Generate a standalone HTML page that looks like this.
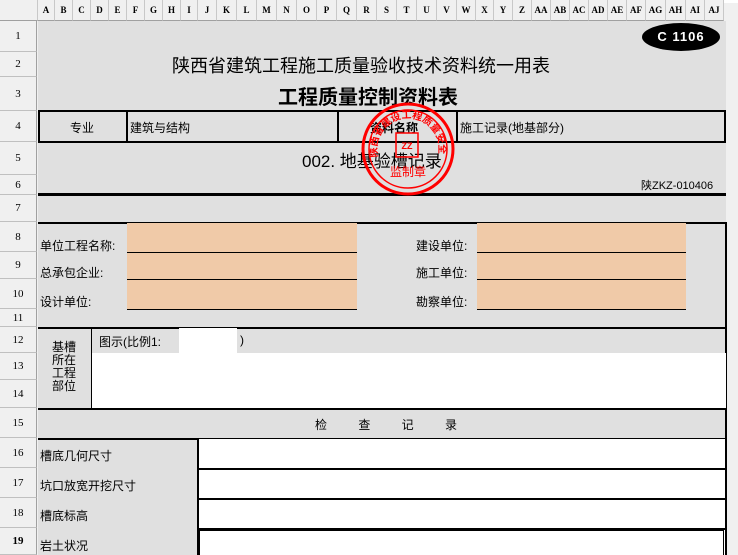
<!DOCTYPE html>
<html><head><meta charset="utf-8"><style>
*{margin:0;padding:0;box-sizing:border-box}
body{width:738px;height:555px;overflow:hidden;background:#f0f0f0;position:relative;font-family:"Liberation Sans","Noto Sans CJK SC","WenQuanYi Zen Hei",sans-serif;color:#000}
.a{position:absolute}
.hdr{position:absolute;top:0;height:21px;font:bold 9px "Liberation Serif",serif;line-height:21px;text-align:center;border-right:1px solid #c8c8c8;border-bottom:1px solid #a0a0a0;background:#f0f0f0}
.rn{position:absolute;left:0;width:37px;font:11px "Liberation Serif",serif;text-align:center;border-bottom:1px solid #c0c0c0;border-right:1px solid #a0a0a0;background:#f0f0f0}
.t{position:absolute;font-size:12px;white-space:nowrap}
.or{position:absolute;background:#f0caa8;border-bottom:1.5px solid #000}
</style></head><body>
<div class="a" style="left:0;top:0;width:738px;height:3px;background:#fff"></div>
<div class="a" style="left:38px;top:21px;width:688px;height:534px;background:#e0e0e0"></div>
<!-- headers -->
<div class="hdr" style="left:0;width:38px"></div>
<div id="h"></div>
<script>
var L=["A","B","C","D","E","F","G","H","I","J","K","L","M","N","O","P","Q","R","S","T","U","V","W","X","Y","Z","AA","AB","AC","AD","AE","AF","AG","AH","AI","AJ"];
var x=[38,55,73,91,109,127,145,163,181,198,217,237,257,277,297,317,337,357,377,397,417,437,457,476,494,513,532,551,570,589,608,627,646,666,686,705,724];
var s="";for(var i=0;i<L.length;i++){s+='<div class="hdr" style="left:'+x[i]+'px;width:'+(x[i+1]-x[i])+'px">'+L[i]+'</div>';}
var r=[21,52,77,111,142,175,195,222,252,279,309,327,353,380,408,438,468,498,528,555];
for(var j=0;j<19;j++){s+='<div class="rn" style="top:'+r[j]+'px;height:'+(r[j+1]-r[j])+'px;line-height:'+(r[j+1]-r[j])+'px'+(j==18?';font-weight:bold':'')+'">'+(j+1)+'</div>';}
document.getElementById("h").innerHTML=s;
</script>
<!-- title -->
<div class="a" style="left:642px;top:23px;width:78px;height:28px;background:#000;border-radius:50%;color:#fff;font:bold 13px 'Liberation Sans',sans-serif;text-align:center;line-height:28px;letter-spacing:1px">C 1106</div>
<div class="t" style="left:172px;top:52px;font-size:18px">陕西省建筑工程施工质量验收技术资料统一用表</div>
<div class="t" style="left:278px;top:81px;font-size:20px;font-weight:bold">工程质量控制资料表</div>
<!-- row4 -->
<div class="a" style="left:38px;top:110px;width:688px;height:33px;border:2px solid #000"></div>
<div class="a" style="left:126px;top:110px;width:2px;height:33px;background:#000"></div>
<div class="a" style="left:337px;top:110px;width:2px;height:33px;background:#000"></div>
<div class="a" style="left:456px;top:110px;width:2px;height:33px;background:#000"></div>
<div class="t" style="left:70px;top:119px">专业</div>
<div class="t" style="left:130px;top:119px">建筑与结构</div>
<div class="t" style="left:370px;top:119px;font-weight:bold">资料名称</div>
<div class="t" style="left:460px;top:119px">施工记录(地基部分)</div>
<div class="t" style="left:302px;top:147px;font-size:17px">002. 地基验槽记录</div>
<div class="t" style="left:641px;top:177px;font-size:11px">陕ZKZ-010406</div>
<div class="a" style="left:38px;top:193px;width:688px;height:3px;background:#000"></div>
<!-- info block -->
<div class="a" style="left:38px;top:222px;width:689px;height:1.5px;background:#000"></div>
<div class="a" style="left:725px;top:222px;width:1.5px;height:333px;background:#000"></div>
<div class="or" style="left:127px;top:223px;width:230px;height:30px"></div>
<div class="or" style="left:127px;top:253px;width:230px;height:27px"></div>
<div class="or" style="left:127px;top:280px;width:230px;height:30px"></div>
<div class="or" style="left:477px;top:223px;width:209px;height:30px"></div>
<div class="or" style="left:477px;top:253px;width:209px;height:27px"></div>
<div class="or" style="left:477px;top:280px;width:209px;height:30px"></div>
<div class="t" style="left:40px;top:237px">单位工程名称:</div>
<div class="t" style="left:40px;top:264px">总承包企业:</div>
<div class="t" style="left:40px;top:293px">设计单位:</div>
<div class="t" style="left:416px;top:237px">建设单位:</div>
<div class="t" style="left:416px;top:264px">施工单位:</div>
<div class="t" style="left:416px;top:293px">勘察单位:</div>
<div class="a" style="left:38px;top:327px;width:688px;height:1.5px;background:#000"></div>
<!-- row12-14 -->
<div class="a" style="left:91px;top:353px;width:635px;height:55px;background:#fff"></div>
<div class="a" style="left:179px;top:328px;width:58px;height:25px;background:#fff"></div>
<div class="a" style="left:90.5px;top:327px;width:1.5px;height:81px;background:#000"></div>
<div class="t" style="left:99px;top:333px">图示(比例1:</div>
<div class="t" style="left:240px;top:333px">)</div>
<div class="t" style="left:52px;top:341px;width:26px;line-height:13px;white-space:normal;font-size:12px">基槽所在工程部位</div>
<div class="a" style="left:38px;top:408px;width:688px;height:1.5px;background:#000"></div>
<div class="t" style="left:315px;top:416px;word-spacing:28px">检 查 记 录</div>
<div class="a" style="left:38px;top:438px;width:688px;height:1.5px;background:#000"></div>
<!-- rows16-19 -->
<div class="a" style="left:198px;top:439px;width:527px;height:116px;background:#fff"></div>
<div class="a" style="left:197px;top:438px;width:1.5px;height:117px;background:#000"></div>
<div class="a" style="left:197px;top:468px;width:529px;height:1.5px;background:#000"></div>
<div class="a" style="left:197px;top:498px;width:529px;height:1.5px;background:#000"></div>
<div class="a" style="left:197px;top:528px;width:529px;height:1.5px;background:#000"></div>
<div class="a" style="left:199px;top:530px;width:525px;height:25px;border:1px solid #000;border-bottom:none"></div>
<div class="t" style="left:40px;top:447px">槽底几何尺寸</div>
<div class="t" style="left:40px;top:477px">坑口放宽开挖尺寸</div>
<div class="t" style="left:40px;top:507px">槽底标高</div>
<div class="t" style="left:40px;top:537px">岩土状况</div>
<!-- stamp -->
<svg class="a" style="left:358px;top:99px" width="100" height="100" viewBox="0 0 100 100">
<circle cx="50" cy="50" r="45" fill="none" stroke="#f00" stroke-width="3"/>
<circle cx="50" cy="50" r="39" fill="none" stroke="#f00" stroke-width="1.5"/>
<path id="arc" d="M20 58 A31 31 0 1 1 80 58" fill="none"/>
<text font-size="10" font-weight="bold" fill="#f00" font-family="Noto Sans CJK SC,sans-serif"><textPath href="#arc">陕西省建设工程质量安全监督</textPath></text>
<rect x="38" y="34" width="22" height="24" fill="none" stroke="#f00" stroke-width="1.5"/>
<text x="49" y="50" font-size="9" font-weight="bold" fill="#f00" text-anchor="middle">ZZ</text>
<text x="50" y="77" font-size="12" fill="#f00" text-anchor="middle" font-family="Noto Sans CJK SC,sans-serif">监制章</text>
</svg>
</body></html>
